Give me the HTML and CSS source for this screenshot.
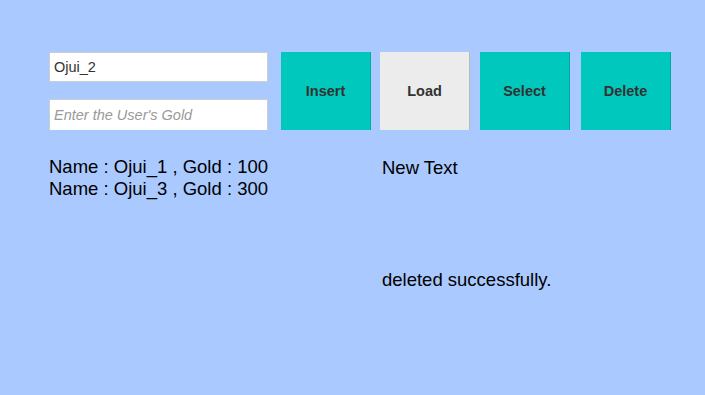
FILE: index.html
```html
<!DOCTYPE html>
<html>
<head>
<meta charset="utf-8">
<link rel="stylesheet" href="styles.css">
</head>
<body>
<div class="screen">
  <div class="top">
    <div class="fields">
      <div class="field name">Ojui_2</div>
      <div class="field gold"><span class="placeholder">Enter the User's Gold</span></div>
    </div>
    <div class="buttons">
      <div class="btn teal">Insert</div>
      <div class="btn gray">Load</div>
      <div class="btn teal">Select</div>
      <div class="btn teal">Delete</div>
    </div>
  </div>
  <div class="bottom">
    <div class="list">
      <div>Name : Ojui_1 , Gold : 100</div>
      <div>Name : Ojui_3 , Gold : 300</div>
    </div>
    <div class="status">
      <div>New Text</div>
      <div class="msg">deleted successfully.</div>
    </div>
  </div>
</div>
</body>
</html>
```
FILE: styles.css
```css
html, body {
  margin: 0;
  padding: 0;
  background: #a9c9ff;
  font-family: "Liberation Sans", Arial, sans-serif;
}
.screen {
  width: 705px;
  height: 395px;
  box-sizing: border-box;
  padding: 52px 0 0 49px;
}
.top {
  display: flex;
}
.fields {
  width: 219px;
  display: flex;
  flex-direction: column;
  gap: 17px;
}
.field {
  background: #ffffff;
  box-sizing: border-box;
  border: 1px solid #c9cdd4;
  padding-left: 4px;
  display: flex;
  align-items: center;
  font-size: 14.5px;
  color: #323232;
}
.field.name {
  height: 30px;
}
.field.gold {
  height: 31px;
  border-bottom: none;
}
.placeholder {
  font-style: italic;
  color: #9a9a9a;
  font-size: 14.5px;
}
.buttons {
  margin-left: 13px;
  display: flex;
}
.btn {
  width: 90px;
  height: 78px;
  box-sizing: border-box;
  display: flex;
  align-items: center;
  justify-content: center;
  font-size: 14.5px;
  font-weight: bold;
  color: #323232;
}
.btn + .btn {
  margin-left: 10px;
}
.btn.gray {
  margin-left: 9px;
}
.btn:last-child {
  margin-left: 11px;
}
.btn.teal {
  background: #00c8bd;
  border-right: 1px solid #00a89f;
}
.btn.gray {
  background: #ececec;
  border-right: 1px solid #b9b9b9;
}
.bottom {
  display: flex;
  margin-top: 26px;
  font-size: 18.5px;
  line-height: 22px;
  color: #000000;
}
.list {
  width: 333px;
}
.status {
  padding-top: 1px;
}
.msg {
  margin-top: 90px;
}
```
